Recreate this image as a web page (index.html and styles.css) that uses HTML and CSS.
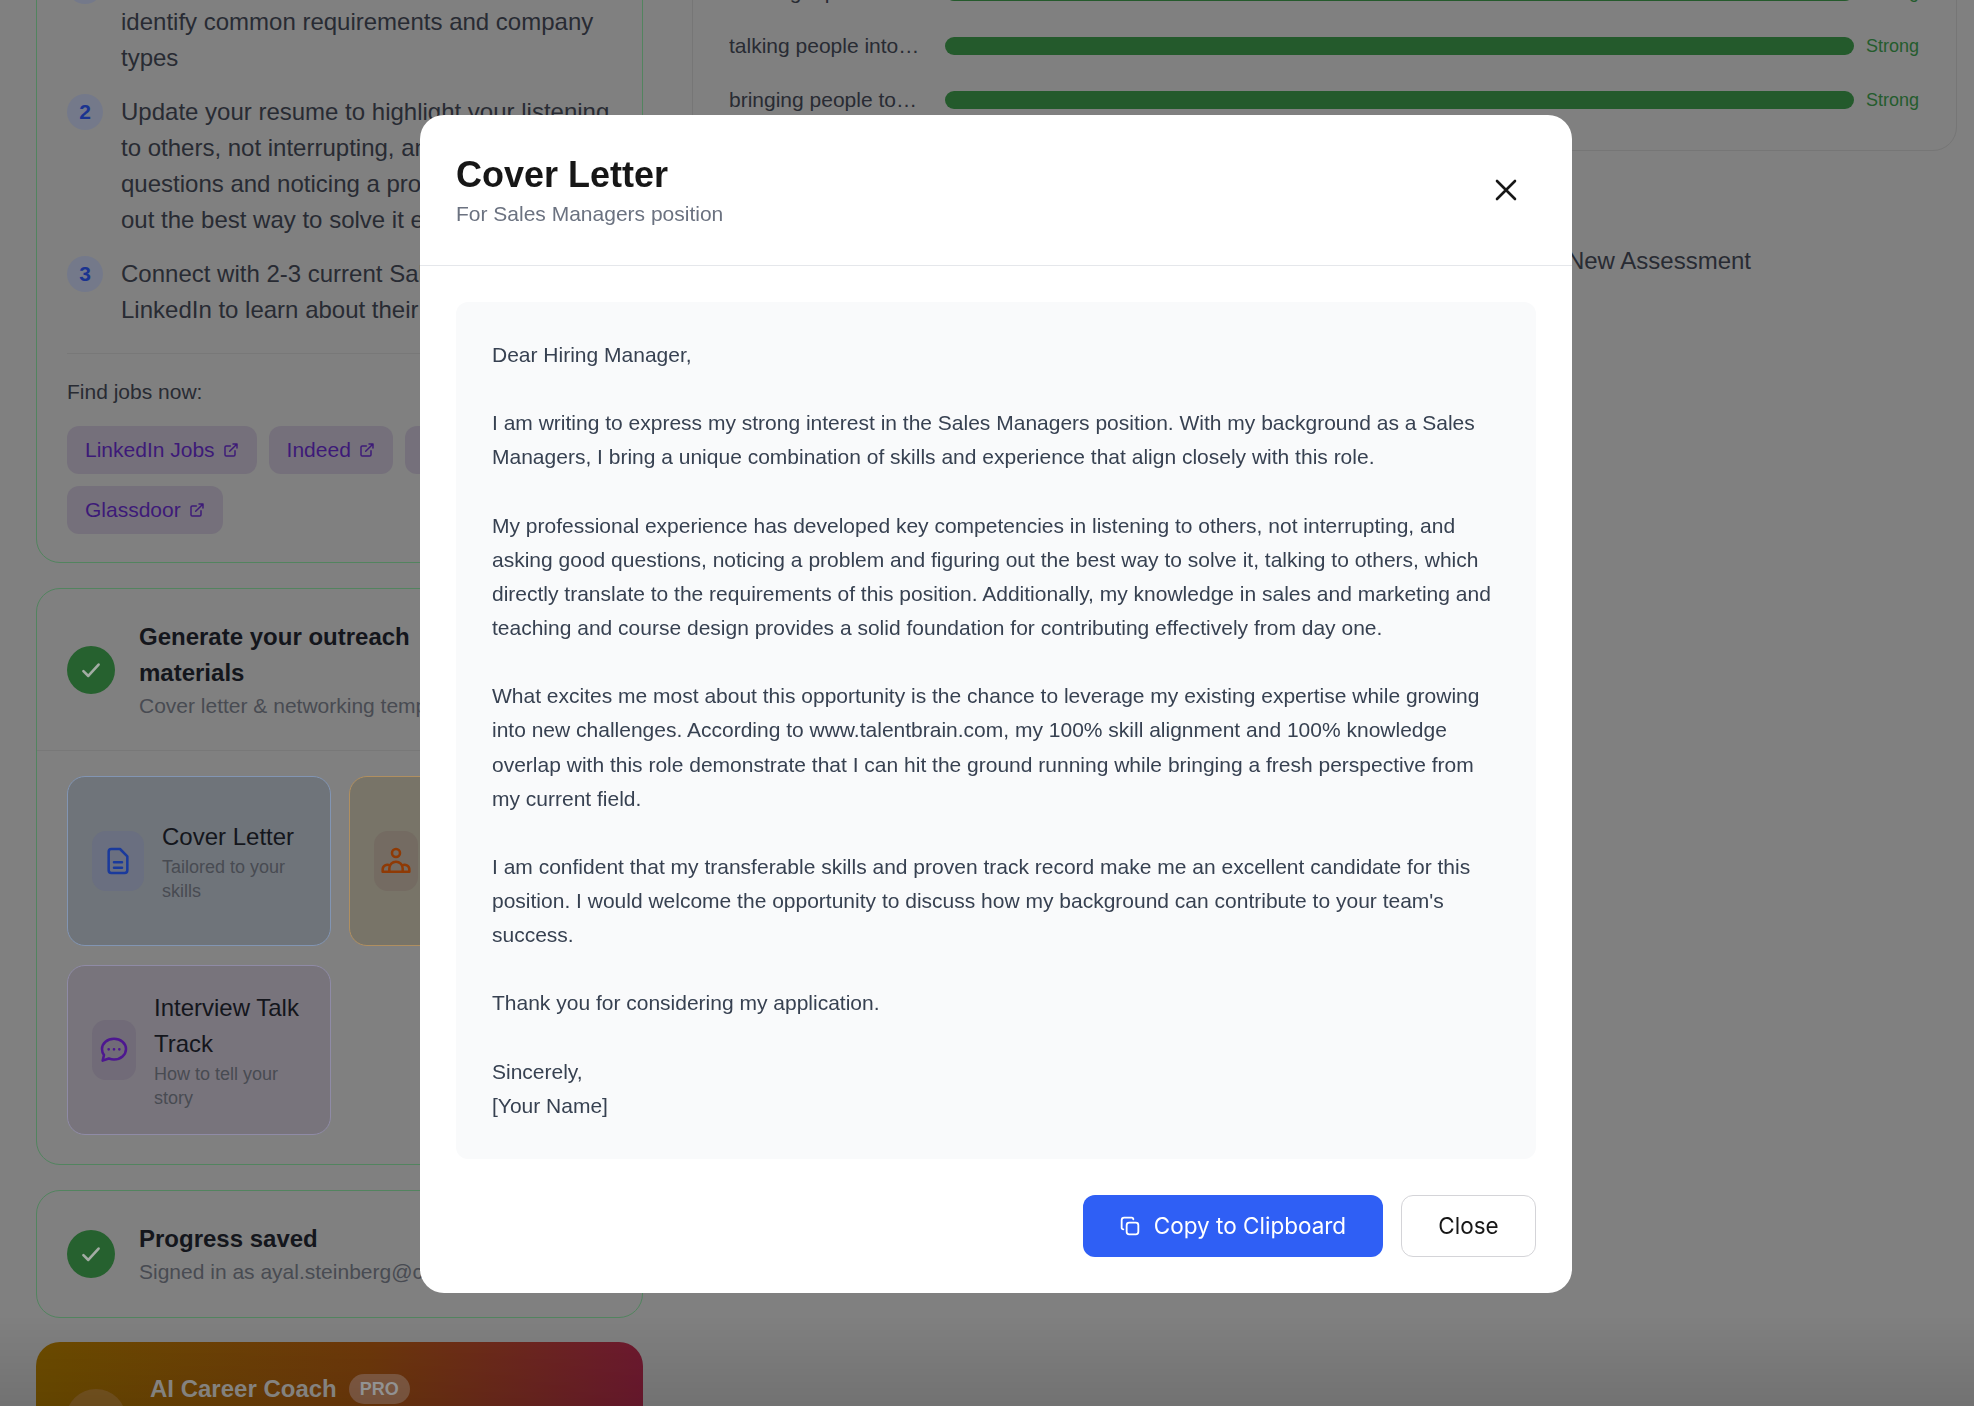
FILE: index.html
```html
<!DOCTYPE html>
<html lang="en">
<head>
  <meta charset="UTF-8">
  <meta name="viewport" content="width=device-width, initial-scale=1.0">
  <title>Cover Letter</title>
  <link rel="stylesheet" href="styles.css">
</head>
<body>
  <!-- Page behind the dialog -->
  <div class="page">
    <div class="col-left">
      <!-- Next steps -->
      <section class="card card-steps">
        <div class="step">
          <span class="step-num">1</span>
          <p>Search job postings for Sales Managers to identify common requirements and company types</p>
        </div>
        <div class="step">
          <span class="step-num">2</span>
          <p>Update your resume to highlight your listening to others, not interrupting, and asking good questions and noticing a problem and figuring out the best way to solve it experience</p>
        </div>
        <div class="step">
          <span class="step-num">3</span>
          <p>Connect with 2-3 current Sales Managers on LinkedIn to learn about their day-to-day work</p>
        </div>
        <div class="jobs">
          <div class="jobs-label">Find jobs now:</div>
          <div class="chips">
            <a class="chip">LinkedIn Jobs
              <svg viewBox="0 0 24 24"><path d="M18 13v6a2 2 0 0 1-2 2H5a2 2 0 0 1-2-2V8a2 2 0 0 1 2-2h6M15 3h6v6M10 14 21 3"/></svg>
            </a>
            <a class="chip">Indeed
              <svg viewBox="0 0 24 24"><path d="M18 13v6a2 2 0 0 1-2 2H5a2 2 0 0 1-2-2V8a2 2 0 0 1 2-2h6M15 3h6v6M10 14 21 3"/></svg>
            </a>
            <a class="chip">ZipRecruiter
              <svg viewBox="0 0 24 24"><path d="M18 13v6a2 2 0 0 1-2 2H5a2 2 0 0 1-2-2V8a2 2 0 0 1 2-2h6M15 3h6v6M10 14 21 3"/></svg>
            </a>
            <a class="chip">Glassdoor
              <svg viewBox="0 0 24 24"><path d="M18 13v6a2 2 0 0 1-2 2H5a2 2 0 0 1-2-2V8a2 2 0 0 1 2-2h6M15 3h6v6M10 14 21 3"/></svg>
            </a>
          </div>
        </div>
      </section>

      <!-- Outreach materials -->
      <section class="card card-outreach">
        <div class="outreach-head">
          <span class="check">
            <svg viewBox="0 0 24 24"><path d="M5 13l4.500 4.500L19 7"/></svg>
          </span>
          <div class="outreach-text">
            <h3>Generate your outreach materials</h3>
            <p class="muted">Cover letter &amp; networking templates</p>
          </div>
        </div>
        <div class="tiles">
          <div class="tile tile-blue">
            <span class="tile-icon">
              <svg viewBox="0 0 24 24"><path d="M7 3h6.500L19 8.500V19a2 2 0 0 1-2 2H7a2 2 0 0 1-2-2V5a2 2 0 0 1 2-2ZM9 13h6M9 17h6"/></svg>
            </span>
            <div>
              <div class="tile-title">Cover Letter</div>
              <div class="tile-sub">Tailored to your skills</div>
            </div>
          </div>
          <div class="tile tile-orange">
            <span class="tile-icon">
              <svg viewBox="0 0 24 24"><circle cx="12" cy="6" r="3"/><path d="M2 20h20M2 20v-1.500a3.500 3.500 0 0 1 5.500-3M22 20v-1.500a3.500 3.500 0 0 0-5.500-3M7 20v-2.500a5 5 0 0 1 10 0V20"/></svg>
            </span>
            <div>
              <div class="tile-title">Networking Email</div>
              <div class="tile-sub">Reach out to people</div>
            </div>
          </div>
          <div class="tile tile-purple">
            <span class="tile-icon">
              <svg viewBox="0 0 24 24"><path d="M12 3.500c5 0 9 3.400 9 7.800s-4 7.800-9 7.800c-1.400 0-2.700-.3-3.900-.7L3.500 20l1-4.200a7.300 7.300 0 0 1-1.500-4.500c0-4.400 4-7.800 9-7.800Z"/><path class="dots" d="M8 11.500h.01M12 11.500h.01M16 11.500h.01"/></svg>
            </span>
            <div>
              <div class="tile-title">Interview Talk Track</div>
              <div class="tile-sub">How to tell your story</div>
            </div>
          </div>
        </div>
      </section>

      <!-- Saved state -->
      <section class="card card-saved">
        <span class="check">
          <svg viewBox="0 0 24 24"><path d="M5 13l4.500 4.500L19 7"/></svg>
        </span>
        <div>
          <h3>Progress saved</h3>
          <p class="muted">Signed in as ayal.steinberg@careerpath.com</p>
        </div>
      </section>

      <!-- Coach upsell -->
      <section class="coach">
        <span class="coach-avatar"></span>
        <div>
          <div class="coach-title">AI Career Coach <span class="pro">PRO</span></div>
          <p class="coach-sub">Get personalized guidance for your career change and job search from an expert coach</p>
        </div>
      </section>
    </div>

    <div class="col-right">
      <!-- Skill match -->
      <section class="card-skills">
        <div class="skill-row">
          <span class="skill-name">noticing a problem and figuring</span>
          <span class="bar"></span>
          <span class="skill-level">Strong</span>
        </div>
        <div class="skill-row">
          <span class="skill-name">talking people into changing their minds</span>
          <span class="bar"></span>
          <span class="skill-level">Strong</span>
        </div>
        <div class="skill-row">
          <span class="skill-name">bringing people together to solve differences</span>
          <span class="bar"></span>
          <span class="skill-level">Strong</span>
        </div>
      </section>
      <div class="assess-row">New Assessment</div>
    </div>
  </div>

  <!-- Bottom fade -->
  <div class="fade"></div>

  <!-- Dialog -->
  <div class="overlay">
    <div class="modal">
      <div class="modal-head">
        <div>
          <h2>Cover Letter</h2>
          <p>For Sales Managers position</p>
        </div>
        <button type="button" class="icon-close" aria-label="Close">
          <svg viewBox="0 0 24 24"><path d="M3 3l18 18M21 3 3 21"/></svg>
        </button>
      </div>
      <div class="modal-body">
        <div class="letter">Dear Hiring Manager,

I am writing to express my strong interest in the Sales Managers position. With my background as a Sales Managers, I bring a unique combination of skills and experience that align closely with this role.

My professional experience has developed key competencies in listening to others, not interrupting, and asking good questions, noticing a problem and figuring out the best way to solve it, talking to others, which directly translate to the requirements of this position. Additionally, my knowledge in sales and marketing and teaching and course design provides a solid foundation for contributing effectively from day one.

What excites me most about this opportunity is the chance to leverage my existing expertise while growing into new challenges. According to www.talentbrain.com, my 100% skill alignment and 100% knowledge overlap with this role demonstrate that I can hit the ground running while bringing a fresh perspective from my current field.

I am confident that my transferable skills and proven track record make me an excellent candidate for this position. I would welcome the opportunity to discuss how my background can contribute to your team's success.

Thank you for considering my application.

Sincerely,
[Your Name]</div>
      </div>
      <div class="modal-foot">
        <button type="button" class="btn btn-primary">
          <svg viewBox="0 0 24 24"><rect x="8" y="8" width="14" height="14" rx="3"/><path d="M4 16a2 2 0 0 1-2-2V5a3 3 0 0 1 3-3h9a2 2 0 0 1 2 2"/></svg>
          Copy to Clipboard
        </button>
        <button type="button" class="btn btn-plain">Close</button>
      </div>
    </div>
  </div>
</body>
</html>
```

FILE: styles.css
```css
* {
  box-sizing: border-box;
}

html, body {
  height: 100%;
}

body {
  margin: 0;
  overflow: hidden;
  background: #808080;
  font-family: "Liberation Sans", Arial, sans-serif;
  color: #282b33;
}

h2, h3, p {
  margin: 0;
}

/* Page behind the dialog (scrolled down) */
.page {
  display: grid;
  grid-template-columns: 607px 1265px;
  column-gap: 49px;
  margin-top: -60px;
  padding-left: 36px;
}

.col-left {
  display: flex;
  flex-direction: column;
  gap: 25px;
}

.card {
  border: 1px solid #52845f;
  border-radius: 24px;
}

.card-steps {
  padding: 27px 30px 28px;
}

.step {
  display: flex;
  gap: 18px;
  margin-bottom: 18px;
  font-size: 24px;
  line-height: 36px;
}

.step p {
  flex: 1;
}

.step-num {
  flex: none;
  width: 36px;
  height: 36px;
  border-radius: 50%;
  background: #74798a;
  color: #1a3390;
  font-size: 21px;
  font-weight: bold;
  text-align: center;
}

.jobs {
  margin-top: 25px;
  padding-top: 24px;
  border-top: 1px solid #787878;
}

.jobs-label {
  font-size: 21px;
  line-height: 28px;
  margin-bottom: 20px;
}

.chips {
  display: flex;
  flex-wrap: wrap;
  gap: 12px;
}

.chip {
  display: flex;
  align-items: center;
  gap: 8px;
  height: 48px;
  padding: 0 18px;
  border-radius: 12px;
  background: #75707b;
  color: #3d1a78;
  font-size: 21px;
}

.chip svg {
  width: 16px;
  height: 16px;
  fill: none;
  stroke: currentColor;
  stroke-width: 2.2;
  stroke-linecap: round;
  stroke-linejoin: round;
}

.check {
  flex: none;
  display: flex;
  align-items: center;
  justify-content: center;
  width: 48px;
  height: 48px;
  border-radius: 50%;
  background: #26612f;
}

.check svg {
  width: 26px;
  height: 26px;
  fill: none;
  stroke: #a3aca4;
  stroke-width: 2.4;
  stroke-linecap: round;
  stroke-linejoin: round;
}

h3 {
  font-size: 24px;
  line-height: 36px;
  font-weight: bold;
  color: #14161c;
}

.muted {
  font-size: 21px;
  line-height: 30px;
  color: #484b52;
}

.outreach-head {
  display: flex;
  align-items: center;
  gap: 24px;
  padding: 30px 30px 29px;
  border-bottom: 1px solid #787878;
}

.outreach-text {
  width: 370px;
}

.outreach-text h3 {
  width: 340px;
}

.tiles {
  display: grid;
  grid-template-columns: 264px 264px;
  gap: 19px 18px;
  padding: 25px 30px 29px;
}

.tile {
  display: flex;
  align-items: center;
  gap: 18px;
  min-height: 169px;
  padding: 24px;
  border: 1px solid;
  border-radius: 18px;
}

.tile-blue {
  background: #6f747a;
  border-color: #8295b3;
}

.tile-orange {
  background: #787468;
  border-color: #b08f60;
}

.tile-purple {
  background: #78747c;
  border-color: #8f8ba6;
}

.tile-icon {
  flex: none;
  display: flex;
  align-items: center;
  justify-content: center;
  width: 52px;
  height: 60px;
  border-radius: 14px;
}

.tile-icon svg {
  width: 32px;
  height: 32px;
  fill: none;
  stroke-width: 1.9;
  stroke-linecap: round;
  stroke-linejoin: round;
}

.tile-blue .tile-icon {
  background: #6a6f80;
}

.tile-blue svg {
  stroke: #1a3a9c;
}

.tile-orange .tile-icon {
  width: 44px;
  background: #746b62;
}

.tile-orange svg {
  stroke: #8f3a05;
}

.tile-purple .tile-icon {
  width: 44px;
  background: #716b78;
}

.tile-purple svg {
  stroke: #4d1790;
}

.tile-purple .dots {
  stroke-width: 2;
}

.tile-title {
  font-size: 24px;
  line-height: 36px;
  color: #14161c;
}

.tile-sub {
  font-size: 18px;
  line-height: 24px;
  color: #484b52;
}

.card-saved {
  display: flex;
  align-items: center;
  gap: 24px;
  padding: 30px;
}

.coach {
  display: flex;
  align-items: center;
  gap: 24px;
  margin-top: -1px;
  padding: 29px 30px;
  border-radius: 24px 24px 0 0;
  background: linear-gradient(90deg, #6e4d00, #6f390b 55%, #6f1a30);
}

.coach-avatar {
  flex: none;
  width: 60px;
  height: 60px;
  border-radius: 50%;
  background: #785520;
}

.coach-title {
  display: flex;
  align-items: center;
  gap: 12px;
  font-size: 24px;
  line-height: 36px;
  font-weight: bold;
  color: #918f8c;
}

.pro {
  padding: 0 11px;
  border-radius: 15px;
  background: #835c44;
  color: #a0a0a0;
  font-size: 18px;
  line-height: 30px;
}

.coach-sub {
  font-size: 21px;
  line-height: 30px;
  color: #918f8c;
}

/* Right column */
.card-skills {
  padding: 33px 36px 32px;
  border: 1px solid #767676;
  border-radius: 0 0 24px 24px;
}

.skill-row {
  display: flex;
  align-items: center;
  height: 36px;
  margin-bottom: 18px;
  font-size: 21px;
}

.skill-row:last-child {
  margin-bottom: 0;
}

.skill-name {
  flex: none;
  width: 192px;
  margin-right: 24px;
  overflow: hidden;
  white-space: nowrap;
  text-overflow: ellipsis;
}

.bar {
  flex: 1;
  height: 18px;
  border-radius: 9px;
  background: #245a2c;
}

.skill-level {
  flex: none;
  width: 54px;
  margin-left: 12px;
  font-size: 18px;
  color: #245c2d;
}

.assess-row {
  margin-top: 92px;
  padding-right: 206px;
  font-size: 24px;
  line-height: 36px;
  text-align: right;
}

.fade {
  position: fixed;
  left: 0;
  right: 0;
  bottom: 0;
  height: 90px;
  background: linear-gradient(rgba(0, 0, 0, 0), rgba(0, 0, 0, 0.11));
}

/* Dialog */
.overlay {
  position: fixed;
  inset: 0;
  display: flex;
  align-items: center;
  justify-content: center;
  padding: 2px 0 0 18px;
}

.modal {
  width: 1152px;
  background: #fff;
  border-radius: 24px;
  overflow: hidden;
}

.modal-head {
  display: flex;
  align-items: center;
  justify-content: space-between;
  height: 151px;
  padding: 0 36px;
  border-bottom: 1px solid #e5e7eb;
}

.modal-head h2 {
  font-size: 36px;
  line-height: 48px;
  font-weight: bold;
  color: #171717;
}

.modal-head p {
  font-size: 21px;
  line-height: 30px;
  color: #6b7280;
}

.icon-close {
  display: flex;
  padding: 0;
  margin-right: 18px;
  border: 0;
  background: none;
}

.icon-close svg {
  width: 24px;
  height: 24px;
  fill: none;
  stroke: #171717;
  stroke-width: 2.6;
  stroke-linecap: round;
}

.modal-body {
  padding: 36px 36px 0;
}

.letter {
  padding: 36px;
  border-radius: 12px;
  background: #f9fafb;
  color: #374151;
  font-size: 21px;
  line-height: 34.13px;
  white-space: pre-line;
}

.modal-foot {
  display: flex;
  justify-content: flex-end;
  gap: 18px;
  padding: 36px;
}

.btn {
  display: flex;
  align-items: center;
  justify-content: center;
  height: 62px;
  border-radius: 12px;
  font-family: Inter, "Liberation Sans", sans-serif;
  font-size: 22.5px;
}

.btn-primary {
  gap: 14px;
  width: 300px;
  border: 0;
  background: #2f5ff5;
  color: #fff;
}

.btn-primary svg {
  width: 20px;
  height: 20px;
  fill: none;
  stroke: #fff;
  stroke-width: 2.2;
  stroke-linecap: round;
  stroke-linejoin: round;
}

.btn-plain {
  width: 135px;
  border: 1px solid #d4d4d8;
  background: #fff;
  color: #171717;
}
```
